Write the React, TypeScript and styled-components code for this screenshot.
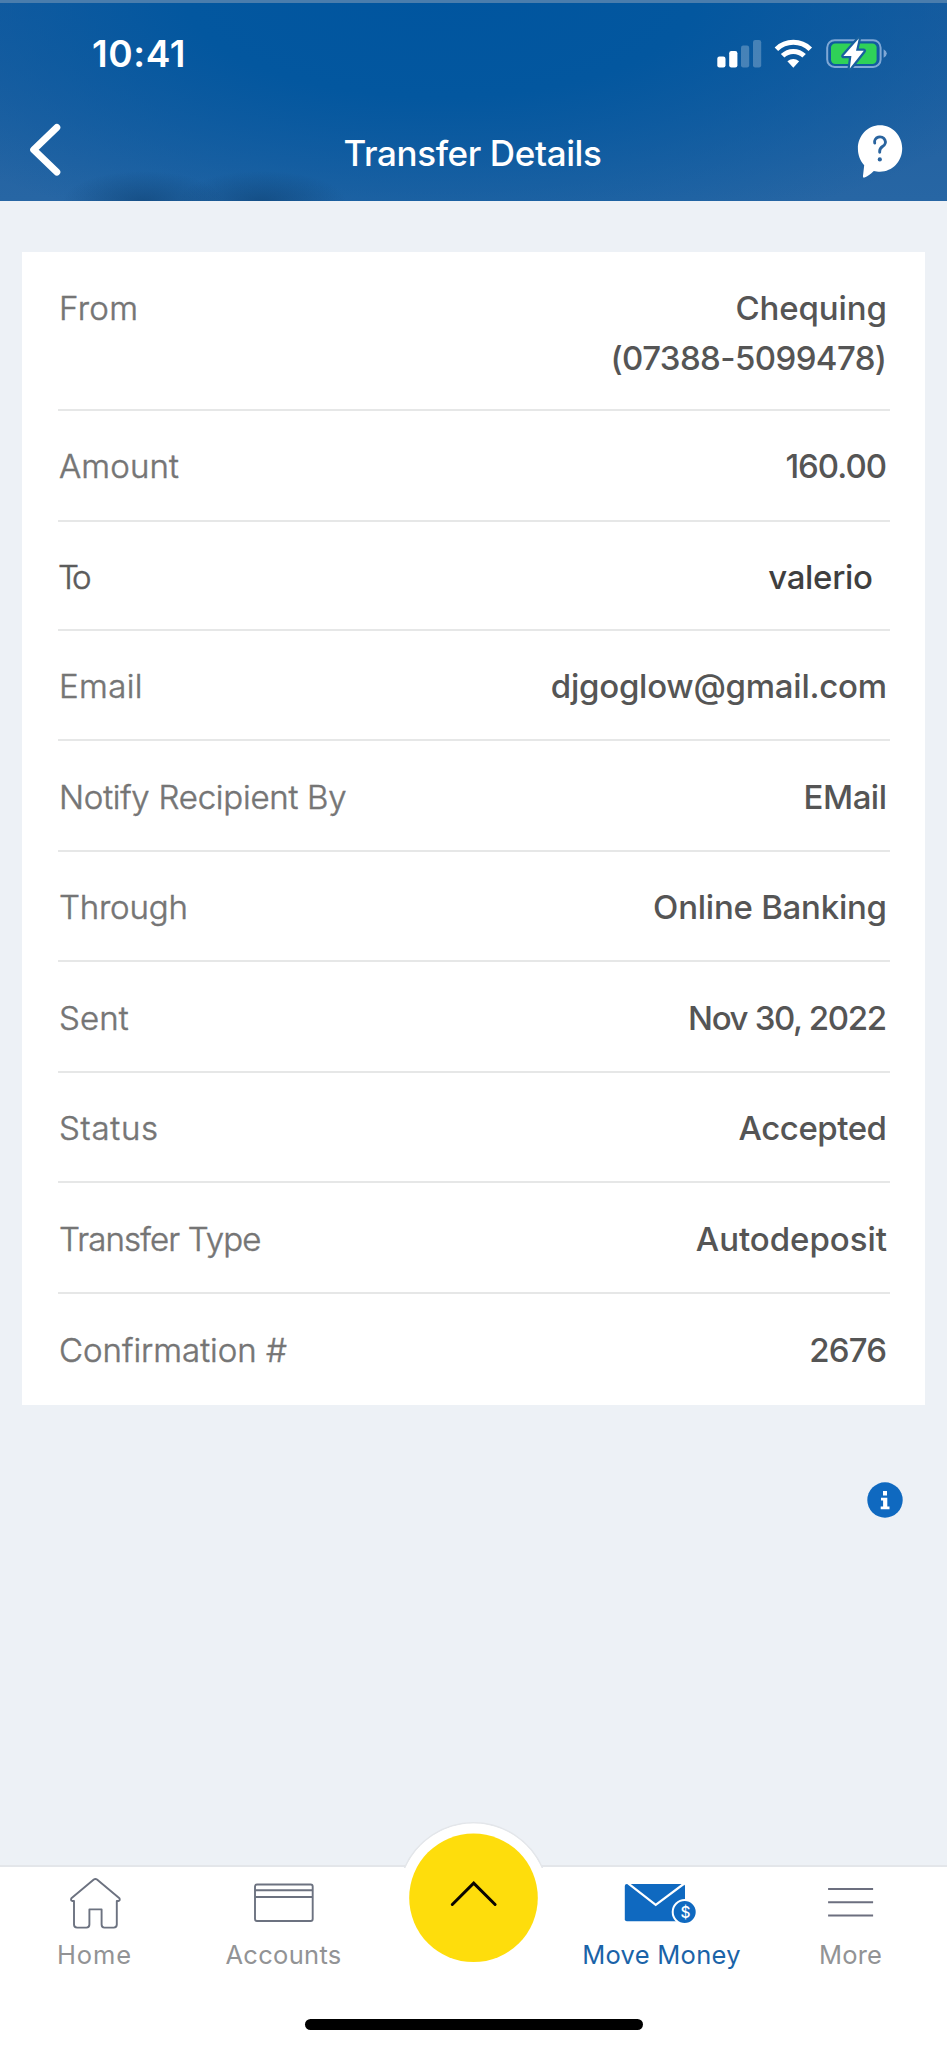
import React from "react";
import styled, { createGlobalStyle } from "styled-components";

const GlobalStyle = createGlobalStyle`
  * { box-sizing: border-box; }
  body {
    margin: 0;
    background: #edf1f6;
    font-family: Inter, "Liberation Sans", sans-serif;
  }
`;

const Screen = styled.div`
  width: 947px;
  height: 2048px;
  display: flex;
  flex-direction: column;
  background: #edf1f6;
  overflow: hidden;
`;

const Header = styled.header`
  height: 201px;
  flex: none;
  border-top: 3px solid #4a7dad;
  color: #fff;
  background:
    radial-gradient(ellipse 80px 30px at 143px 100%, rgba(14, 66, 116, 0.6), rgba(14, 66, 116, 0) 100%),
    radial-gradient(ellipse 84px 30px at 262px 100%, rgba(14, 66, 116, 0.6), rgba(14, 66, 116, 0) 100%),
    radial-gradient(ellipse 640px 260px at 440px -10px, #00559f 0%, #03579f 40%, rgba(3, 87, 159, 0) 100%),
    linear-gradient(180deg, #1d5d9f 0%, #2766a4 100%);
`;

const StatusBar = styled.div`
  height: 99px;
  display: flex;
  align-items: center;
  justify-content: space-between;
  padding: 2px 58px 0 92px;
`;

const Clock = styled.time`
  font-size: 37px;
  font-weight: 600;
  line-height: 44px;
  letter-spacing: 0.6px;
`;

const StatusIcons = styled.svg`
  display: block;
  width: 174px;
  height: 40px;
`;

const TitleBar = styled.div`
  height: 99px;
  display: grid;
  grid-template-columns: 80px 1fr 80px;
  align-items: center;
  justify-items: center;
`;

const Title = styled.h1`
  margin: 3px 2px 0 0;
  font-size: 35px;
  font-weight: 500;
  line-height: 44px;
  letter-spacing: -0.38px;
`;

const IconButton = styled.button`
  display: block;
  width: 80px;
  height: 80px;
  padding: 0;
  border: 0;
  background: none;
  svg { display: block; }
`;

const Card = styled.dl`
  width: 903px;
  margin: 51px 0 0 22px;
  padding: 0 35px 0 36px;
  background: #fff;
`;

const Row = styled.div<{ $height: number; $top: number }>`
  height: ${(p) => p.$height}px;
  display: flex;
  justify-content: space-between;
  padding: ${(p) => p.$top}px 3px 0 1px;
  font-size: 33px;
  line-height: 50px;
  border-bottom: 2px solid #e6e7e7;
  &:last-child { border-bottom: 0; }
`;

const Label = styled.dt<{ $tracking: number; $strong?: boolean }>`
  font-weight: 300;
  color: ${(p) => (p.$strong ? "#5c5c5c" : "#757575")};
  -webkit-text-stroke: 0.5px currentColor;
  letter-spacing: ${(p) => p.$tracking}px;
  margin-left: ${(p) => (p.$strong ? -1 : 0)}px;
`;

const Value = styled.dd<{ $strong?: boolean }>`
  margin: 0 ${(p) => (p.$strong ? 14 : 0)}px 0 0;
  display: flex;
  flex-direction: column;
  align-items: flex-end;
  font-weight: 500;
  color: ${(p) => (p.$strong ? "#3f3f3f" : "#555")};
`;

const Line = styled.span<{ $tracking: number }>`
  letter-spacing: ${(p) => p.$tracking}px;
  margin-right: ${(p) => -p.$tracking}px;
`;

const InfoRow = styled.div`
  display: flex;
  flex: 1;
  justify-content: flex-end;
  align-items: flex-start;
  padding: 77px 44px 0 0;
`;

const TabBar = styled.nav`
  position: relative;
  height: 183px;
  flex: none;
  border-top: 2px solid #e3e6ea;
  background: #fff;
`;

const Tabs = styled.div`
  display: grid;
  grid-template-columns: repeat(5, 1fr);
  height: 152px;
  padding: 5px 2px 0 0;
`;

const Tab = styled.div<{ $active?: boolean; $tracking: number }>`
  display: flex;
  flex-direction: column;
  align-items: center;
  font-size: 25.5px;
  line-height: 32px;
  letter-spacing: ${(p) => p.$tracking}px;
  color: ${(p) => (p.$active ? "#1a63a8" : "#929395")};
  svg { display: block; margin-bottom: 7px; }
`;

const Fab = styled.button`
  position: absolute;
  left: 398px;
  top: -45px;
  width: 151px;
  height: 151px;
  padding: 0;
  border: 0;
  background: none;
  svg { display: block; }
`;

const HomeIndicator = styled.div`
  width: 338px;
  height: 11px;
  margin: 0 auto;
  border-radius: 6px;
  background: #000;
`;

type Field = {
  label: string;
  labelTracking: number;
  lines: [string, number][];
  height: number;
  top: number;
  strong?: boolean;
};

const fields: Field[] = [
  { label: "From", labelTracking: 0.35, lines: [["Chequing", -0.1], ["(07388-5099478)", -0.6]], height: 159, top: 31 },
  { label: "Amount", labelTracking: 0.1, lines: [["160.00", -1]], height: 111, top: 30 },
  { label: "To", labelTracking: -4.4, lines: [["valerio", -0.3]], height: 109, top: 30, strong: true },
  { label: "Email", labelTracking: 0.4, lines: [["djgoglow@gmail.com", -0.25]], height: 110, top: 30 },
  { label: "Notify Recipient By", labelTracking: -0.24, lines: [["EMail", -0.5]], height: 111, top: 31 },
  { label: "Through", labelTracking: -0.2, lines: [["Online Banking", -0.25]], height: 110, top: 30 },
  { label: "Sent", labelTracking: 0.15, lines: [["Nov 30, 2022", -1.36]], height: 111, top: 31 },
  { label: "Status", labelTracking: 0.75, lines: [["Accepted", -0.47]], height: 110, top: 30 },
  { label: "Transfer Type", labelTracking: -0.85, lines: [["Autodeposit", -0.03]], height: 111, top: 31 },
  { label: "Confirmation #", labelTracking: 0, lines: [["2676", -0.82]], height: 111, top: 31 },
];

const SignalWifiBattery = () => (
  <StatusIcons viewBox="715 34 174 40">
    <g fill="#fff">
      <rect x="717.3" y="56.5" width="8.2" height="11" rx="2.2" />
      <rect x="729.2" y="51" width="8.2" height="16.5" rx="2.2" />
      <rect x="741" y="45.5" width="8.2" height="22" rx="2.2" opacity="0.25" />
      <rect x="753" y="40" width="8.2" height="27.5" rx="2.2" opacity="0.25" />
    </g>
    <g fill="none" stroke="#fff" strokeWidth="5">
      <path d="M776.4 49.2 A24.4 24.4 0 0 1 810.3 49.2" />
      <path d="M782.6 55.8 A15.3 15.3 0 0 1 804.1 55.8" />
    </g>
    <path d="M787.4 61.2 Q793.3 56.6 799.2 61.2 L793.3 67.7 Z" fill="#fff" />
    <rect x="827.2" y="40.2" width="53.4" height="26.8" rx="7.5" fill="none" stroke="#7fa8d6" strokeWidth="2" />
    <rect x="831" y="43.4" width="45.6" height="20.6" rx="4.2" fill="#2fd158" />
    <path d="M883.6 49.3 Q886.8 51 886.8 53.6 Q886.8 56.2 883.6 57.8 Z" fill="#7fa8d6" />
    <path
      d="M858.8 38.6 L843.4 56 H851.4 L849.8 68.6 L863.8 50.8 H856 Z"
      fill="#fff"
      stroke="#17609f"
      strokeWidth="4.5"
      strokeLinejoin="round"
      paintOrder="stroke"
    />
  </StatusIcons>
);

const BackIcon = () => (
  <svg width="80" height="80" viewBox="0 112 80 80">
    <path d="M56.8 127.5 L33.7 149.8 L56.8 172" fill="none" stroke="#fff" strokeWidth="7" strokeLinecap="round" strokeLinejoin="round" />
  </svg>
);

const HelpIcon = () => (
  <svg width="80" height="80" viewBox="867 112 80 80" overflow="visible">
    <path
      d="M880 125.3 C892.4 125.3 902.2 135.7 902.2 148.5 C902.2 161.3 892.4 171.7 880 171.7 C877.8 171.7 875.6 171.6 873.8 171 C870.5 174 867.5 176.5 864.6 177.5 C863.2 178 862.8 177 863 175.8 L864.2 165.2 C860.2 161 857.9 155 857.9 148.5 C857.9 135.7 867.7 125.3 880 125.3 Z"
      fill="#fff"
    />
    <path d="M874.7 143 A5.4 5.1 0 1 1 882.8 146.3 Q879.7 148.3 879.7 151 V152.3" fill="none" stroke="#2a649f" strokeWidth="2.9" strokeLinecap="round" />
    <circle cx="879.8" cy="159.4" r="2.1" fill="#2a649f" />
  </svg>
);

const InfoIcon = () => (
  <svg width="36" height="36" viewBox="867 1482 36 36">
    <circle cx="885" cy="1500" r="17.7" fill="#0f69c0" />
    <path d="M883 1491 h4 v4.6 h-4 z M881 1497.8 h6.3 v8.8 h2.2 v2.7 h-8.8 v-2.7 h2.4 v-6 h-2.1 z" fill="#fff" />
  </svg>
);

const HomeIcon = () => (
  <svg width="80" height="60" viewBox="54.6 1872 80 60" fill="none" stroke="#6c7280" strokeWidth="1.9" strokeLinejoin="round" strokeLinecap="round">
    <path d="M73.6 1901 H71.8 Q70 1900.2 71 1898.3 L93.4 1879.6 Q95 1878.4 96.6 1879.6 L119 1898.3 Q120 1900.2 118.2 1901 H116.4 V1924.5 Q116.4 1927.6 113.3 1927.6 H104 Q101.2 1927.6 101.2 1924.5 V1909.4 H89 V1924.5 Q89 1927.6 86 1927.6 H76.7 Q73.6 1927.6 73.6 1924.5 Z" />
  </svg>
);

const CardIcon = () => (
  <svg width="80" height="60" viewBox="244 1872 80 60" fill="none" stroke="#6c7280" strokeWidth="1.9">
    <rect x="255" y="1884.5" width="57.7" height="36.5" rx="2" />
    <path d="M255 1890.2 H312.7 M255 1897 H312.7" />
  </svg>
);

const TransferIcon = () => (
  <svg width="80" height="60" viewBox="622 1872 80 60">
    <rect x="624.8" y="1884" width="60.2" height="37.2" rx="2" fill="#0f69c0" />
    <path d="M627.5 1882.8 L655.7 1904.8 L685 1883" fill="none" stroke="#fff" strokeWidth="2.2" />
    <circle cx="684.7" cy="1912" r="12" fill="#0f69c0" stroke="#fff" strokeWidth="2" />
    <text x="685.4" y="1917.6" textAnchor="middle" fontFamily="Inter, sans-serif" fontSize="15.5" fontWeight="500" letterSpacing="0" fill="#fff">$</text>
  </svg>
);

const MenuIcon = () => (
  <svg width="80" height="60" viewBox="810.6 1872 80 60">
    <path d="M827.7 1889 H872.7 M827.7 1902.3 H872.7 M827.7 1915.6 H872.7" stroke="#6c6f7f" strokeWidth="2" />
  </svg>
);

export default function App() {
  return (
    <Screen>
      <GlobalStyle />
      <Header>
        <StatusBar>
          <Clock>10:41</Clock>
          <SignalWifiBattery />
        </StatusBar>
        <TitleBar>
          <IconButton aria-label="Back"><BackIcon /></IconButton>
          <Title>Transfer Details</Title>
          <IconButton aria-label="Help"><HelpIcon /></IconButton>
        </TitleBar>
      </Header>

      <Card>
        {fields.map((f) => (
          <Row key={f.label} $height={f.height} $top={f.top}>
            <Label $tracking={f.labelTracking} $strong={f.strong}>{f.label}</Label>
            <Value $strong={f.strong}>
              {f.lines.map(([text, tracking]) => (
                <Line key={text} $tracking={tracking}>{text}</Line>
              ))}
            </Value>
          </Row>
        ))}
      </Card>

      <InfoRow>
        <InfoIcon />
      </InfoRow>

      <TabBar>
        <Tabs>
          <Tab $tracking={0.9}><HomeIcon />Home</Tab>
          <Tab $tracking={0.3}><CardIcon />Accounts</Tab>
          <span />
          <Tab $active $tracking={0.28}><TransferIcon />Move Money</Tab>
          <Tab $tracking={0.17}><MenuIcon />More</Tab>
        </Tabs>
        <Fab aria-label="Open actions">
          <svg width="151" height="151" viewBox="398 1821.5 151 151">
            <path d="M404.6 1867.5 A75.2 75.2 0 0 1 542.4 1867.5" fill="#fff" stroke="#e3e6ea" strokeWidth="1.8" />
            <circle cx="473.5" cy="1897.3" r="74.3" fill="#fff" />
            <circle cx="473.5" cy="1897.3" r="64.3" fill="#fedd0c" />
            <path d="M452.3 1904 L473.7 1882.6 L495.1 1904" fill="none" stroke="#0a0500" strokeWidth="3" strokeLinecap="round" />
          </svg>
        </Fab>
        <HomeIndicator />
      </TabBar>
    </Screen>
  );
}
